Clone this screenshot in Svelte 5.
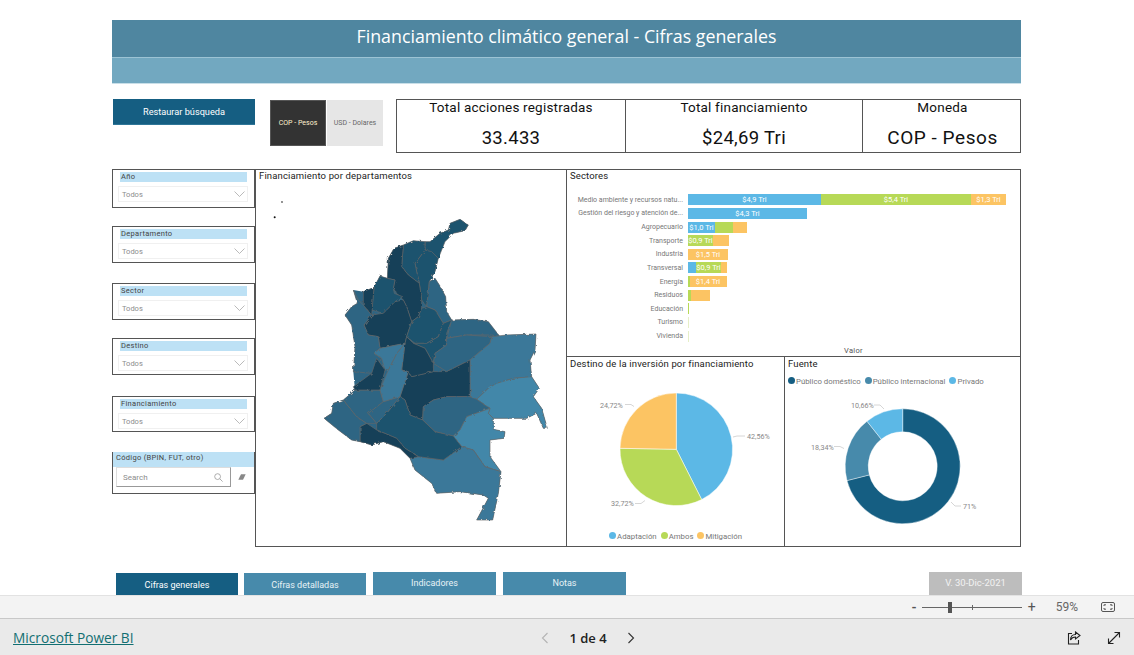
<script lang="ts">
  const slicers = [
    { label: 'Año', gap: 0, h: 39 },
    { label: 'Departamento', gap: 18, h: 37 },
    { label: 'Sector', gap: 20, h: 37 },
    { label: 'Destino', gap: 18, h: 37 },
    { label: 'Financiamiento', gap: 21, h: 36 }
  ]

  const BLUE = '#5cb8e6'
  const GREEN = '#b7d957'
  const ORANGE = '#fcc463'

  const sectors = [
    { name: 'Medio ambiente y recursos natu...', parts: [[133, BLUE, '$4,9 Tri'], [150, GREEN, '$5,4 Tri'], [35, ORANGE, '$1,3 Tri']] },
    { name: 'Gestión del riesgo y atención de...', parts: [[119, BLUE, '$4,3 Tri']] },
    { name: 'Agropecuario', parts: [[27, BLUE, '$1,0 Tri'], [18, GREEN, ''], [14, ORANGE, '']] },
    { name: 'Transporte', parts: [[25, GREEN, '$0,9 Tri'], [16, ORANGE, '']] },
    { name: 'Industria', parts: [[40, ORANGE, '$1,5 Tri']] },
    { name: 'Transversal', parts: [[8, BLUE, ''], [25, GREEN, '$0,9 Tri'], [6, ORANGE, '']] },
    { name: 'Energía', parts: [[1.5, GREEN, ''], [37, ORANGE, '$1,4 Tri']] },
    { name: 'Residuos', parts: [[3, GREEN, ''], [19, ORANGE, '']] },
    { name: 'Educación', parts: [[1, GREEN, '']] },
    { name: 'Turismo', parts: [[0.6, '#e6efc8', '']] },
    { name: 'Vivienda', parts: [[0.6, '#e6efc8', '']] }
  ]

  const C1 = '#123f58'
  const C2 = '#1c526e'
  const C3 = '#2e6583'
  const C4 = '#3a7899'
  const C5 = '#4287a9'

  const outline = '480,58 505,75 495,92 460,100 440,115 425,135 415,175 405,215 388,245 405,235 420,258 437,290 440,335 455,360 520,358 565,365 600,410 620,405 708,402 705,450 690,480 695,530 718,565 700,590 725,625 742,685 730,685 710,640 680,655 580,655 580,688 615,695 612,715 570,720 570,770 603,815 595,880 578,960 530,960 565,895 550,885 480,875 410,880 395,850 345,810 330,775 300,745 250,725 215,735 180,725 155,720 115,690 72,655 95,640 100,610 130,600 165,570 160,515 165,440 155,375 135,345 155,320 172,310 160,270 190,275 222,262 240,228 262,235 265,175 282,145 310,135 340,122 375,125 390,125 420,100 445,90 450,70'

  // departamentos, trazados a mano
  const departments = [
    [C2, '375,125 390,125 420,100 445,90 450,70 480,58 505,75 495,92 460,100 435,125 415,175 375,150'],
    [C2, '375,150 395,155 415,175 405,215 388,245 385,290 380,320 365,300 358,250 350,215 345,190'],
    [C2, '310,135 340,122 375,125 375,150 345,190 350,215 358,250 325,225 305,200'],
    [C1, '265,175 282,145 310,135 305,200 325,225 358,250 365,300 365,325 355,350 335,365 320,320 310,300 290,280 280,265 285,240 262,235'],
    [C2, '215,330 222,262 240,228 262,235 285,240 280,265 283,280 308,290 285,305 250,340'],
    [C1, '192,375 215,345 250,340 285,305 310,300 320,320 335,365 320,410 315,430 240,445 235,410 205,405'],
    [C3, '160,270 175,300 190,315 215,345 192,375 205,405 235,410 240,445 222,460 245,475 215,520 160,515 165,440 155,375 135,345 155,320 172,310'],
    [C1, '190,275 222,262 215,345 190,315'],
    [C3, '388,245 405,235 420,258 437,290 440,335 455,360 430,370 405,330 380,320'],
    [C2, '355,350 365,325 380,320 405,330 430,370 415,410 380,430 345,430 320,410 335,365'],
    [C2, '455,360 440,400 440,435 405,460 400,490 375,445 340,430 380,430 415,410 430,370'],
    [C3, '455,360 520,358 565,365 600,410 575,405 500,405 440,415'],
    [C3, '440,415 500,405 575,410 570,430 510,480 440,515 400,490 405,460 440,435'],
    [C4, '510,480 570,430 575,410 620,405 708,402 705,450 690,480 695,530 640,535 590,550 565,565 530,598 510,590'],
    [C1, '510,480 510,590 440,590 400,600 370,620 368,660 330,645 315,600 300,590 325,515 335,530 400,515 440,515'],
    [C1, '320,410 340,430 375,445 400,490 400,515 335,530 325,515 305,510 315,430'],
    [C5, '565,565 590,550 640,535 695,530 718,565 700,590 725,625 742,685 730,685 710,640 680,655 580,655 565,640 570,625 530,598'],
    [C3, '370,620 400,600 440,590 510,590 530,598 570,625 500,650 480,690 460,708 405,695 368,660'],
    [C5, '460,708 480,690 500,650 570,625 565,640 580,655 580,688 615,695 612,715 570,720 570,770 603,815 555,800 520,750 485,740'],
    [C4, '330,775 355,770 430,780 485,740 520,750 555,800 603,815 595,880 578,960 530,960 565,895 550,885 480,875 410,880 395,850 345,810'],
    [C2, '230,670 260,640 300,590 315,600 330,645 368,660 405,695 460,708 485,740 430,780 355,770 315,745 290,715 230,690'],
    [C1, '180,680 200,670 230,690 290,715 315,745 355,770 330,775 300,745 250,725 215,735 180,725'],
    [C3, '72,655 95,640 100,610 130,600 170,650 200,670 180,680 180,725 155,720 115,690'],
    [C3, '130,600 165,570 240,570 250,605 205,640 230,670 200,670 170,650'],
    [C3, '205,640 250,605 300,590 260,640 230,670'],
    [C4, '240,570 265,510 290,460 315,430 305,510 325,515 300,590 250,605'],
    [C1, '160,560 215,520 230,475 255,510 240,570 165,570'],
    [C4, '222,460 240,445 315,430 290,460 265,510 255,510 245,475']
  ]

  function polar(cx: number, cy: number, r: number, pct: number) {
    const a = (pct / 100) * Math.PI * 2
    return [cx + r * Math.sin(a), cy - r * Math.cos(a)]
  }

  function slices(cx: number, cy: number, outer: number, inner: number, data: [number, string][]) {
    let start = 0
    return data.map(([pct, color]) => {
      const end = start + pct
      const large = pct > 50 ? 1 : 0
      const [x1, y1] = polar(cx, cy, outer, start)
      const [x2, y2] = polar(cx, cy, outer, end)
      let d = `M${x1} ${y1}A${outer} ${outer} 0 ${large} 1 ${x2} ${y2}`
      if (inner > 0) {
        const [x3, y3] = polar(cx, cy, inner, end)
        const [x4, y4] = polar(cx, cy, inner, start)
        d += `L${x3} ${y3}A${inner} ${inner} 0 ${large} 0 ${x4} ${y4}Z`
      } else {
        d += `L${cx} ${cy}Z`
      }
      start = end
      return { d, color }
    })
  }

  const pie = slices(676.3, 449.3, 56.3, 0, [[42.56, BLUE], [32.72, GREEN], [24.72, ORANGE]])
  const donut = slices(902.7, 466.3, 57.5, 34.5, [[71, '#155e82'], [18.34, '#478aab'], [10.66, BLUE]])
</script>

<div class="page">
  <main class="report">
    <header class="banner">
      <h1>Financiamiento climático general - Cifras generales</h1>
      <div class="banner-sub"></div>
    </header>

    <section class="top-row">
      <button class="restore">Restaurar búsqueda</button>
      <div class="toggle">
        <span class="on">COP - Pesos</span>
        <span class="off">USD - Dolares</span>
      </div>
      <div class="kpis">
        <div class="kpi k1"><p class="kpi-title">Total acciones registradas</p><p class="kpi-value">33.433</p></div>
        <div class="kpi k2"><p class="kpi-title">Total financiamiento</p><p class="kpi-value">$24,69 Tri</p></div>
        <div class="kpi k3"><p class="kpi-title">Moneda</p><p class="kpi-value big">COP - Pesos</p></div>
      </div>
    </section>

    <section class="board">
      <aside class="filters">
        {#each slicers as s}
          <div class="slicer" style="margin-top:{s.gap}px;height:{s.h}px">
            <div class="slicer-label">{s.label}</div>
            <div class="dropdown">
              <span>Todos</span>
              <svg width="11" height="6" viewBox="0 0 11 6"><path d="M.5.5l5 5 5-5" fill="none" stroke="#a8a8a8" stroke-width=".8"/></svg>
            </div>
          </div>
        {/each}
        <div class="slicer code">
          <div class="code-label">Código (BPIN, FUT, otro)</div>
          <div class="search-row">
            <div class="search">
              <span>Search</span>
              <svg width="9" height="9" viewBox="0 0 9 9"><circle cx="3.6" cy="3.6" r="2.9" fill="none" stroke="#999" stroke-width=".8"/><path d="M5.8 5.8L8.6 8.6" stroke="#999" stroke-width=".8"/></svg>
            </div>
            <svg class="eraser" width="8" height="6" viewBox="0 0 8 6"><path d="M3 .3h4.7L5 5.7H.3z" fill="#888"/></svg>
          </div>
        </div>
      </aside>

      <div class="panel map-panel">
        <div class="panel-title">Financiamiento por departamentos</div>
        <svg class="map" width="260" height="320" viewBox="0 0 780 960">
          <defs>
            <filter id="rough" x="-5%" y="-5%" width="110%" height="110%">
              <feTurbulence type="fractalNoise" baseFrequency="0.09" numOctaves="2" seed="4"/>
              <feDisplacementMap in="SourceGraphic" scale="9"/>
            </filter>
          </defs>
          <circle cx="-54" cy="6" r="2.5" fill="#111"/>
          <circle cx="-76" cy="52" r="3" fill="#111"/>
          <g filter="url(#rough)">
            <polygon fill={C3} points={outline}/>
            {#each departments as [fill, points]}
              <polygon {fill} {points} stroke="#666" stroke-width="2" stroke-linejoin="round"/>
            {/each}
          </g>
        </svg>
      </div>

      <div class="panel sectors">
        <div class="panel-title">Sectores</div>
        <div class="bars">
          {#each sectors as row}
            <span class="bar-name">{row.name}</span>
            <div class="bar-track">
              {#each row.parts as [w, color, label]}
                <span class="bar-part" style="width:{w}px;background:{color}">{label}</span>
              {/each}
            </div>
          {/each}
        </div>
        <div class="axis">Valor</div>
      </div>

      <div class="panel pie-panel">
        <div class="panel-title">Destino de la inversión por financiamiento</div>
        <svg class="chart" width="218" height="158" viewBox="567 372 218 158">
          {#each pie as s}
            <path d={s.d} fill={s.color} stroke="#fff" stroke-width=".5"/>
          {/each}
          <g class="leader">
            <path d="M625 404.500h6l3 2"/>
            <path d="M733 437l4-1h8"/>
            <path d="M635 503.500h6l4-3"/>
          </g>
          <text x="600" y="408">24,72%</text>
          <text x="747" y="439">42,56%</text>
          <text x="611" y="506">32,72%</text>
        </svg>
        <div class="legend centered">
          <span><i style="background:{BLUE}"></i>Adaptación</span>
          <span><i style="background:{GREEN}"></i>Ambos</span>
          <span><i style="background:{ORANGE}"></i>Mitigación</span>
        </div>
      </div>

      <div class="panel donut-panel">
        <div class="panel-title">Fuente</div>
        <div class="legend">
          <span><i style="background:#155e82"></i>Público doméstico</span>
          <span><i style="background:#478aab"></i>Público internacional</span>
          <span><i style="background:{BLUE}"></i>Privado</span>
        </div>
        <svg class="chart" width="236" height="158" viewBox="785 388 236 158">
          {#each donut as s}
            <path d={s.d} fill={s.color} stroke="#fff" stroke-width=".4"/>
          {/each}
          <g class="leader">
            <path d="M874 405h6l4 4"/>
            <path d="M834 446.500h6l4 2"/>
            <path d="M951 502l4 4h6"/>
          </g>
          <text x="851" y="408">10,66%</text>
          <text x="811" y="450">18,34%</text>
          <text x="963" y="509">71%</text>
        </svg>
      </div>
    </section>

    <nav class="tabs">
      <a class="tab active" href="#a">Cifras generales</a>
      <a class="tab low" href="#b">Cifras detalladas</a>
      <a class="tab" href="#c">Indicadores</a>
      <a class="tab" href="#d">Notas</a>
      <span class="version">V. 30-Dic-2021</span>
    </nav>
  </main>

  <div class="zoombar">
    <span class="minus">-</span>
    <div class="slider"><b class="thumb"></b><b class="tick"></b></div>
    <span class="plus">+</span>
    <span class="pct">59%</span>
    <svg width="14" height="10" viewBox="0 0 14 10" fill="none" stroke="#555"><rect x=".5" y=".5" width="13" height="9" rx="1.5"/><path d="M3 4V2.800h2M9 2.800h2V4M11 6v1.200H9M5 7.200H3V6"/></svg>
  </div>

  <footer class="pbi">
    <a class="brand" href="#pbi">Microsoft Power BI</a>
    <div class="pager">
      <svg width="8" height="12" viewBox="0 0 8 12"><path d="M6.500 1L1.500 6l5 5" fill="none" stroke="#b4b4b4" stroke-width="1.100"/></svg>
      <span>1 de 4</span>
      <svg width="8" height="12" viewBox="0 0 8 12"><path d="M1.500 1l5 5-5 5" fill="none" stroke="#333" stroke-width="1.100"/></svg>
    </div>
    <div class="actions">
      <svg width="14" height="14" viewBox="0 0 14 14" fill="none" stroke="#222" stroke-width="1.100"><path d="M5 2.500H1.500v10.500h10V9"/><path d="M8.500 1l4.500 3.500L8.500 8V6C6 6 4.500 7 3.500 9c0-3.500 2-5.500 5-5.500z"/></svg>
      <svg width="14" height="14" viewBox="0 0 14 14" fill="none" stroke="#222" stroke-width="1.100"><path d="M1.500 12.500l11-11M7.500 1.500h5v5M1.500 7.500v5h5"/></svg>
    </div>
  </footer>
</div>

<style>
  :global(body) {
    margin: 0;
    background: #fff;
  }

  .page {
    width: 1134px;
    height: 655px;
    display: flex;
    flex-direction: column;
    overflow: hidden;
    font-family: Roboto, "Liberation Sans", sans-serif;
    color: #222;
  }

  .report {
    height: 595px;
    box-sizing: border-box;
    padding: 20px 0 0 112px;
  }

  .banner {
    width: 909px;
  }

  h1 {
    margin: 0;
    height: 37px;
    background: #4f86a0;
    color: #fff;
    font: 400 17.800px/33px "Open Sans", sans-serif;
    text-align: center;
  }

  .banner-sub {
    height: 27px;
    background: #72a8c0;
    border-top: 1px solid #9cc3d4;
    border-bottom: 1px solid #c9dfe8;
    box-sizing: border-box;
  }

  .top-row {
    width: 909px;
    height: 70px;
    margin-top: 15px;
    display: flex;
    align-items: flex-start;
  }

  .restore {
    width: 142px;
    height: 26px;
    margin-left: 1px;
    padding: 0;
    border: 0;
    border-bottom: 1px solid #2f7698;
    background: #155e82;
    color: #fff;
    font: 400 9.200px Roboto, sans-serif;
  }

  .toggle {
    display: flex;
    gap: 1px;
    margin: 1px 0 0 15px;
    font-size: 7px;
  }

  .toggle span {
    width: 56px;
    height: 46px;
    display: flex;
    align-items: center;
    justify-content: center;
    box-sizing: border-box;
  }

  .on {
    background: #333;
    color: #fff2cf;
    border: 1px solid #555;
  }

  .off {
    background: #e6e6e6;
    color: #666;
  }

  .kpis {
    display: grid;
    grid-template-columns: 229px 237px 159px;
    width: 625px;
    height: 54px;
    margin-left: 13px;
    box-sizing: border-box;
    border: 1px solid #555;
  }

  .kpi {
    text-align: center;
    border-right: 1px solid #555;
  }

  .k3 {
    border-right: 0;
  }

  .kpi p {
    margin: 0;
    color: #111;
  }

  .kpi-title {
    font-size: 13.500px;
    line-height: 15px;
    letter-spacing: .2px;
  }

  .kpi-value {
    margin-top: 12px !important;
    font-size: 18.500px;
    line-height: 22px;
    letter-spacing: .3px;
  }

  .kpi-value.big {
    font-size: 19px;
    letter-spacing: .55px;
  }

  .board {
    display: grid;
    grid-template-columns: 143px 312px 218px 236px;
    grid-template-rows: 188px 190px;
    width: 909px;
    height: 378px;
    box-sizing: border-box;
  }

  .filters {
    grid-row: 1 / 3;
    display: flex;
    flex-direction: column;
  }

  .slicer {
    box-sizing: border-box;
    border: 1px solid #555;
    padding: 2px 6px 0 5px;
    width: 143px;
  }

  .slicer-label {
    height: 10px;
    margin: 0 1px 0 2px;
    background: #bde1f5;
    color: #444;
    font-size: 7.500px;
    line-height: 10px;
    letter-spacing: .3px;
    padding-left: 1px;
  }

  .dropdown {
    display: flex;
    align-items: center;
    justify-content: space-between;
    box-sizing: border-box;
    height: 16px;
    margin-top: 4px;
    padding: 0 2px 0 3px;
    border: 1px solid #f0f0f0;
    color: #8c8c8c;
    font-size: 7.500px;
  }

  .slicer.code {
    margin-top: 20px;
    height: 42px;
    padding: 0;
  }

  .code-label {
    height: 15px;
    margin-top: -1px;
    background: #bde1f5;
    color: #444;
    font-size: 7.500px;
    line-height: 11px;
    letter-spacing: .3px;
    padding-left: 3px;
  }

  .search-row {
    display: flex;
    align-items: center;
    padding-left: 3px;
    gap: 7px;
  }

  .search {
    display: flex;
    align-items: center;
    justify-content: space-between;
    width: 115px;
    height: 20px;
    box-sizing: border-box;
    padding: 0 7px 0 6px;
    border: 1px solid #ddd;
    border-right-color: #999;
    border-bottom-color: #999;
    color: #8c8c8c;
    font-size: 8px;
  }

  .panel {
    position: relative;
    box-sizing: border-box;
    border: 1px solid #555;
    min-width: 0;
  }

  .panel-title {
    height: 14px;
    padding-left: 3px;
    font-size: 9.500px;
    line-height: 12px;
    letter-spacing: .15px;
    color: #222;
  }

  .map-panel {
    grid-row: 1 / 3;
  }

  .map {
    display: block;
    margin: 16px 0 0 44px;
    overflow: visible;
  }

  .sectors {
    grid-column: 3 / 5;
    border-left: 0;
    display: flex;
    flex-direction: column;
  }

  .bars {
    display: grid;
    grid-template-columns: 116px 1fr;
    grid-auto-rows: 13.640px;
    column-gap: 5px;
    margin-top: 9px;
    align-items: center;
  }

  .bar-name {
    font-size: 7px;
    color: #777;
    text-align: right;
    white-space: nowrap;
  }

  .bar-track {
    display: flex;
    height: 11px;
  }

  .bar-part {
    display: block;
    height: 11px;
    text-align: center;
    color: #fff;
    font-size: 7.500px;
    line-height: 12px;
    white-space: nowrap;
  }

  .axis {
    margin-top: 3px;
    padding-left: 120px;
    text-align: center;
    font-size: 7.500px;
    color: #555;
    letter-spacing: .3px;
  }

  .pie-panel,
  .donut-panel {
    border-top: 0;
    border-left: 0;
  }

  .pie-panel .panel-title,
  .donut-panel .panel-title {
    padding-top: 1px;
  }

  .chart {
    display: block;
  }

  .chart text {
    font-size: 7.200px;
    fill: #888;
    font-family: Roboto, sans-serif;
  }

  .leader path {
    fill: none;
    stroke: #ccc;
    stroke-width: .8;
  }

  .legend {
    display: flex;
    gap: 4px;
    height: 16px;
    box-sizing: border-box;
    align-items: center;
    padding: 3px 0 0 3px;
    font-size: 7.800px;
    color: #777;
  }

  .legend.centered {
    justify-content: center;
    padding: 0;
    margin-top: -2px;
  }

  .legend i {
    display: inline-block;
    width: 7px;
    height: 7px;
    margin-right: 1px;
    border-radius: 50%;
  }

  .tabs {
    display: flex;
    align-items: flex-end;
    width: 910px;
    height: 23px;
    margin-top: 25px;
    padding-left: 4px;
    box-sizing: border-box;
    font-size: 9px;
  }

  .tab {
    width: 123px;
    height: 23px;
    margin-right: 7px;
    background: #478aab;
    color: #e8f2f6;
    text-align: center;
    line-height: 22px;
    text-decoration: none;
  }

  .tab.low,
  .tab.active {
    height: 22px;
    line-height: 24px;
    width: 122px;
    margin-right: 6px;
  }

  .tab.low {
    margin-right: 7px;
  }

  .tab.active {
    background: #155e82;
    color: #fff;
  }

  .version {
    width: 93px;
    height: 23px;
    margin-left: auto;
    background: #bdbdbd;
    color: #f2f2f2;
    font-size: 9.500px;
    line-height: 22px;
    text-align: center;
  }

  .zoombar {
    display: flex;
    align-items: center;
    justify-content: flex-end;
    height: 24px;
    box-sizing: border-box;
    padding-right: 19px;
    background: #f3f3f3;
    border-top: 1px solid #e2e2e2;
    border-bottom: 1px solid #c8c8c8;
    color: #555;
  }

  .minus {
    font-size: 13px;
    font-weight: 700;
    margin-right: 5px;
  }

  .slider {
    position: relative;
    width: 100px;
    height: 1px;
    background: #666;
  }

  .thumb {
    position: absolute;
    left: 26px;
    top: -5px;
    width: 4px;
    height: 11px;
    background: #555;
  }

  .tick {
    position: absolute;
    left: 50px;
    top: -2px;
    width: 1px;
    height: 5px;
    background: #666;
  }

  .plus {
    font-size: 14px;
    margin-left: 6px;
    width: 10px;
  }

  .pct {
    font-size: 12px;
    margin: 0 23px 0 18px;
    color: #666;
  }

  .pbi {
    display: grid;
    grid-template-columns: 1fr auto 1fr;
    align-items: center;
    flex: 1;
    padding: 1px 13px 0;
    background: #eaeaea;
  }

  .brand {
    color: #126f72;
    font: 400 13.700px "Open Sans", sans-serif;
  }

  .pager {
    display: flex;
    align-items: center;
    gap: 20px;
    margin-left: 42px;
    font: 600 13px "Open Sans", sans-serif;
    color: #222;
  }

  .actions {
    display: flex;
    justify-content: flex-end;
    gap: 26px;
  }
</style>
